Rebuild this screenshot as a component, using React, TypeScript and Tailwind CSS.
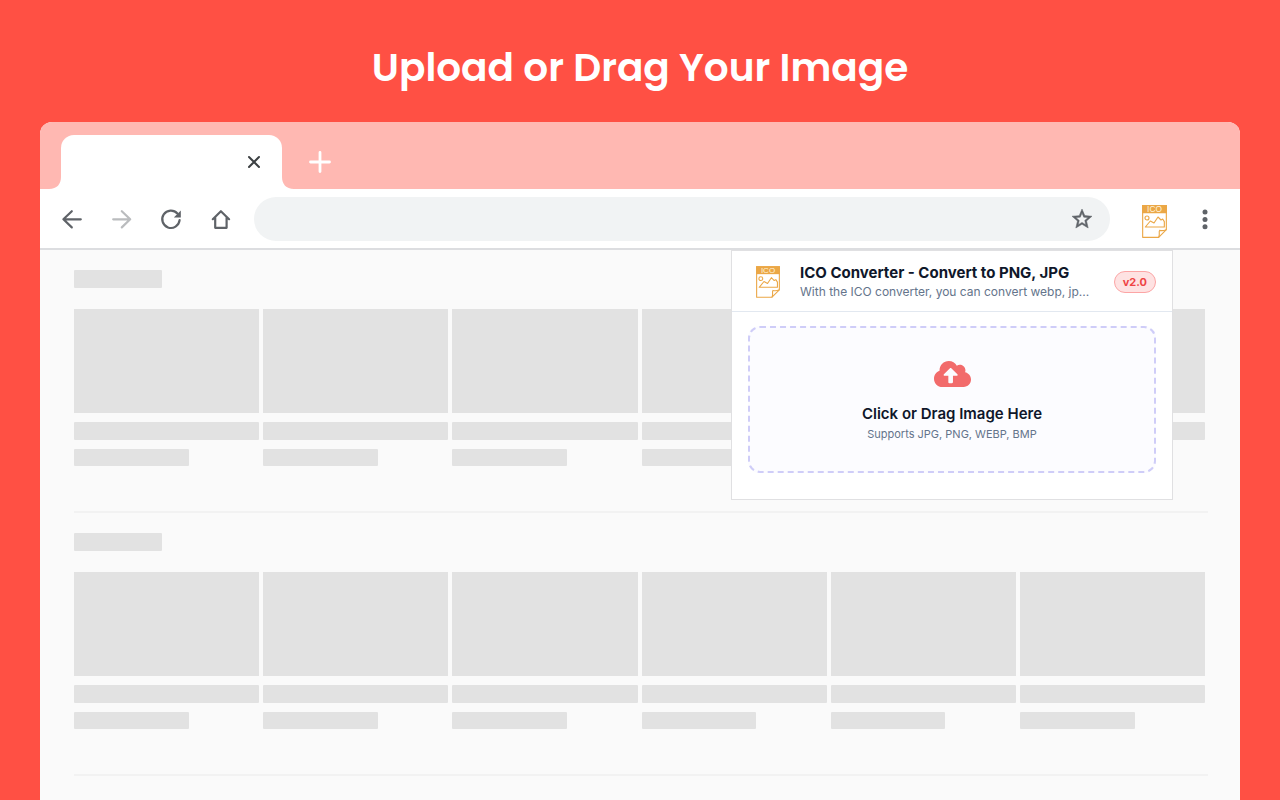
import type { ReactNode } from "react";
import { FaCloudUploadAlt } from "react-icons/fa";

const SECTIONS = [0, 1];
const CARDS = [0, 1, 2, 3, 4, 5];

function IcoLogo({ className }: { className: string }) {
  return (
    <svg viewBox="0 0 75 99" className={className} fill="none" stroke="#eba746" strokeWidth="3.4" aria-hidden="true">
      <path d="M2 2H73V74L50 97H2Z" fill="#fff" strokeLinejoin="round" />
      <path d="M0 0H75V25H0Z" fill="#eba746" stroke="none" />
      <text x="37.5" y="22" textAnchor="middle" fontSize="25" fontFamily="Liberation Sans Narrow, Liberation Sans, sans-serif" fill="#fff3dc" stroke="none">
        ICO
      </text>
      <circle cx="15" cy="39" r="6" />
      <path d="M10 66L25 48L36 54L48 36L57 45L62 42L67 50V66Z" strokeLinejoin="round" />
      <path d="M50 97C55 88 49 80 53 76C60 78 66 77 73 74" />
    </svg>
  );
}

function ToolButton({ label, color, children }: { label: string; color: string; children: ReactNode }) {
  return (
    <button type="button" aria-label={label} className={`size-6 shrink-0 ${color}`}>
      <svg viewBox="0 0 24 24" className="size-6" fill="none" stroke="currentColor" strokeWidth="2.2" strokeLinecap="round" strokeLinejoin="round">
        {children}
      </svg>
    </button>
  );
}

function TabStrip() {
  return (
    <div className="flex items-end bg-[#ffb8b2] pt-[13px]">
      <svg viewBox="0 0 12 12" className="ml-[9px] size-3" aria-hidden="true">
        <path d="M12 0V12H0C8 12 12 7 12 0Z" fill="#fff" />
      </svg>
      <div className="flex h-[54px] w-[221px] items-center justify-end rounded-t-[13px] bg-white pr-4">
        <button type="button" aria-label="Close tab" className="size-6 text-[#3c4043]">
          <svg viewBox="0 0 24 24" className="size-6" stroke="currentColor" strokeWidth="2" strokeLinecap="round">
            <path d="M7 7L17 17M17 7L7 17" />
          </svg>
        </button>
      </div>
      <svg viewBox="0 0 12 12" className="size-3" aria-hidden="true">
        <path d="M0 0V12H12C4 12 0 7 0 0Z" fill="#fff" />
      </svg>
      <div className="flex h-[54px] items-center pl-3.5">
        <button type="button" aria-label="New tab" className="size-6 text-white">
          <svg viewBox="0 0 24 24" className="size-6" stroke="currentColor" strokeWidth="2.8" strokeLinecap="round">
            <path d="M12 2.5V21.5M2.5 12H21.5" />
          </svg>
        </button>
      </div>
    </div>
  );
}

function Toolbar() {
  return (
    <div className="flex h-[61px] items-center border-b-2 border-[#dcdde0] bg-white pr-[23px] pl-[19px]">
      <div className="flex gap-[26px]">
        <ToolButton label="Back" color="text-[#5f6368]">
          <path d="M21.8 12.3H4.5M12.8 4.2L4.4 12.3L12.8 20.4" />
        </ToolButton>
        <ToolButton label="Forward" color="text-[#babcbe]">
          <path d="M4.2 12.3H21M12.8 4.2L21.2 12.3L12.8 20.4" />
        </ToolButton>
        <ToolButton label="Reload" color="text-[#5f6368]">
          <path d="M20.6 13.2A8.7 8.7 0 1 1 18.4 6.4" />
          <path d="M21.8 3.6V10.6H14.8Z" fill="currentColor" stroke="none" />
        </ToolButton>
        <ToolButton label="Home" color="text-[#5f6368]">
          <path d="M6.2 10.6V20.8H17.6V10.6M3.8 12.2L11.9 4.2L20.1 12.2" />
        </ToolButton>
      </div>
      <div className="ml-[21px] flex h-11 flex-1 items-center rounded-full bg-[#f1f3f4] pr-4 pl-5">
        <input type="text" aria-label="Address" className="min-w-0 flex-1 bg-transparent text-base outline-none" />
        <button type="button" aria-label="Bookmark this page" className="size-6 text-[#5f6368]">
          <svg viewBox="0 0 24 24" className="size-6" fill="currentColor" stroke="currentColor" strokeWidth="0.5">
            <path d="M22 9.24l-7.19-.62L12 2 9.19 8.63 2 9.24l5.46 4.73L5.82 21 12 17.27 18.18 21l-1.63-7.03L22 9.24zM12 15.4l-3.76 2.27 1-4.28-3.32-2.88 4.38-.38L12 6.1l1.71 4.04 4.38.38-3.32 2.88 1 4.28L12 15.4z" />
          </svg>
        </button>
      </div>
      <button type="button" aria-label="ICO Converter" className="mt-1.5 ml-8 h-[33px] w-[25px]">
        <IcoLogo className="h-[33px] w-[25px]" />
      </button>
      <button type="button" aria-label="Menu" className="ml-[26px] size-6 text-[#5f6368]">
        <svg viewBox="0 0 24 24" className="size-6" fill="currentColor">
          <circle cx="12" cy="5" r="2.5" />
          <circle cx="12" cy="12.4" r="2.5" />
          <circle cx="12" cy="19.8" r="2.5" />
        </svg>
      </button>
    </div>
  );
}

function SkeletonSection() {
  return (
    <section className="mr-8 ml-[34px] border-b-2 border-[#f2f2f2] pt-5 pb-[45px]">
      <div className="h-[18px] w-[88px] rounded-[1px] bg-[#e2e2e2]" />
      <div className="mt-[21px] mr-[3px] grid grid-cols-6 gap-1">
        {CARDS.map((card) => (
          <div key={card}>
            <div className="h-[104px] bg-[#e2e2e2]" />
            <div className="mt-[9px] h-[18px] rounded-[1px] bg-[#e2e2e2]" />
            <div className="mt-[9px] h-[17px] w-[62%] rounded-[1px] bg-[#e2e2e2]" />
          </div>
        ))}
      </div>
    </section>
  );
}

function ConverterPopup() {
  return (
    <div className="absolute top-0 right-[67px] w-[442px] border border-[#e0e0e2] bg-white font-[Inter,sans-serif]">
      <header className="flex h-[61px] items-center border-b border-[#e2e8f0] pt-px pr-4 pl-6">
        <IcoLogo className="h-8 w-6 shrink-0" />
        <div className="ml-5">
          <h2 className="text-[15px] leading-5 font-bold whitespace-nowrap text-[#0f172a]">ICO Converter - Convert to PNG, JPG</h2>
          <p className="text-[12px] leading-[18px] whitespace-nowrap text-[#64748b]">With the ICO converter, you can convert webp, jp...</p>
        </div>
        <span className="ml-auto rounded-full border border-[#fca5a5] bg-[#fee2e2] px-2 text-[11px] leading-5 font-bold text-[#ef4444]">v2.0</span>
      </header>
      <div className="px-4 pt-3.5 pb-[26px]">
        <label className="flex h-[147px] cursor-pointer flex-col items-center rounded-xl border-2 border-dashed border-[#cfcdf8] bg-[#fcfcff] pt-[31px]">
          <input type="file" accept="image/*" className="sr-only" />
          <FaCloudUploadAlt className="h-[30px] w-[37px] text-[#f26b6b]" />
          <span className="mt-[15px] text-[15px] leading-5 font-semibold text-[#0f172a]">Click or Drag Image Here</span>
          <span className="mt-0.5 text-[11px] leading-4 text-[#64748b]">Supports JPG, PNG, WEBP, BMP</span>
        </label>
      </div>
    </div>
  );
}

export default function App() {
  return (
    <div className="flex h-screen flex-col overflow-hidden bg-[#ff5044]">
      <h1 className="shrink-0 pt-10 pb-[26px] text-center font-[Poppins,Inter,sans-serif] text-[39px] leading-[56px] font-semibold text-white">
        Upload or Drag Your Image
      </h1>
      <main className="mx-10 flex-1 overflow-hidden rounded-t-xl bg-[#fafafa]">
        <TabStrip />
        <Toolbar />
        <div className="relative">
          {SECTIONS.map((section) => (
            <SkeletonSection key={section} />
          ))}
          <ConverterPopup />
        </div>
      </main>
    </div>
  );
}
